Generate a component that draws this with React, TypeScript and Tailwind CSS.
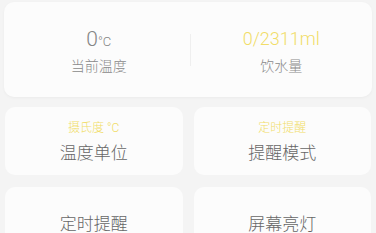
export default function App() {
  const font = { fontFamily: "Roboto, 'Noto Sans CJK SC', sans-serif" };
  return (
    <div className="w-[376px] h-[233px] overflow-hidden bg-[#f4f4f4] font-light" style={font}>
      <div className="mx-[4px] mt-[2px] h-[95px] rounded-[10px] bg-[#fcfcfc] shadow-[0_1px_3px_rgba(0,0,0,0.04)] flex items-center">
        <div className="flex-1 flex flex-col items-center pt-[2px] pl-[4px]">
          <div className="h-[28px] flex items-baseline text-[#858585]">
            <span className="text-[21px] leading-[28px]">0</span>
            <span className="text-[13px] leading-[28px]">°C</span>
          </div>
          <div className="mt-[3px] text-[14px] leading-[20px] text-[#8a8a8a]">当前温度</div>
        </div>
        <div className="w-px h-[32px] bg-[#efefef]" />
        <div className="flex-1 flex flex-col items-center pt-[2px]">
          <div className="h-[28px] text-[18px] leading-[28px] text-[#f1dd68]">0/2311ml</div>
          <div className="mt-[3px] text-[14px] leading-[20px] text-[#8a8a8a]">饮水量</div>
        </div>
      </div>
      <div className="px-[5px] mt-[10px] grid grid-cols-2 gap-x-[11px] gap-y-[12px]">
        <div className="h-[68px] rounded-[10px] bg-[#fcfcfc] flex flex-col items-center pt-[13px]">
          <div className="text-[12px] leading-[16px] text-[#f1dd68]">摄氏度 °C</div>
          <div className="mt-[5px] text-[17px] leading-[24px] text-[#666666]">温度单位</div>
        </div>
        <div className="h-[68px] rounded-[10px] bg-[#fcfcfc] flex flex-col items-center pt-[13px]">
          <div className="text-[12px] leading-[16px] text-[#f1dd68]">定时提醒</div>
          <div className="mt-[5px] text-[17px] leading-[24px] text-[#666666]">提醒模式</div>
        </div>
        <div className="h-[68px] rounded-[10px] bg-[#fcfcfc] flex flex-col items-center pt-[25px]">
          <div className="text-[17px] leading-[24px] text-[#666666]">定时提醒</div>
        </div>
        <div className="h-[68px] rounded-[10px] bg-[#fcfcfc] flex flex-col items-center pt-[25px]">
          <div className="text-[17px] leading-[24px] text-[#666666]">屏幕亮灯</div>
        </div>
      </div>
    </div>
  );
}
